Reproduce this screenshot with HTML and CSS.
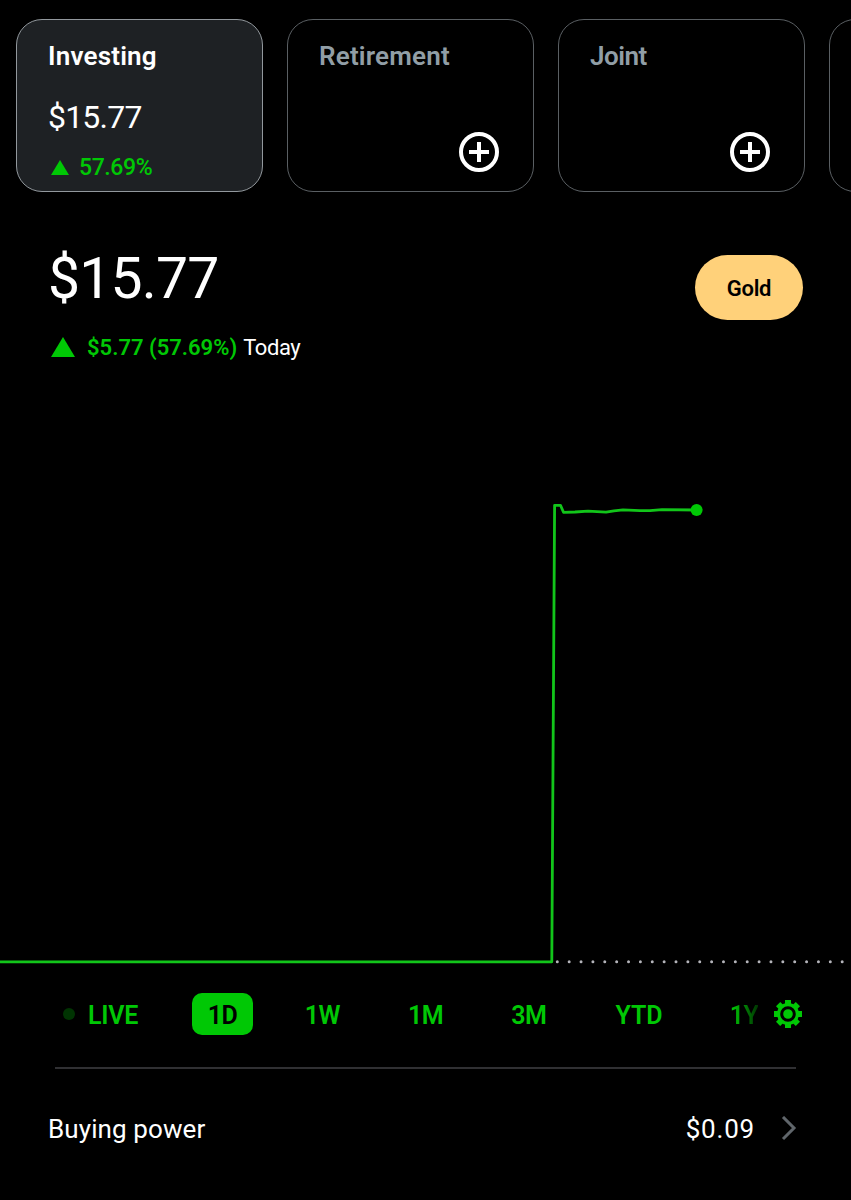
FILE: index.html
```html
<!DOCTYPE html>
<html lang="en">
<head>
    <meta charset="UTF-8">
    <meta name="viewport" content="width=device-width, initial-scale=1">
    <title>Investing</title>
    <link rel="stylesheet" href="styles.css">
</head>
<body>
    <div class="accounts">
        <div class="card active">
            <div class="card-title">Investing</div>
            <div class="card-value">$15.77</div>
            <div class="card-change">
                <svg width="18" height="15" viewBox="0 0 18 15"><path d="M9 0L18 15H0z" fill="#00c805"/></svg>
                <span>57.69%</span>
            </div>
        </div>
        <div class="card">
            <div class="card-title">Retirement</div>
            <svg class="add" width="40" height="40" viewBox="0 0 40 40" fill="none" stroke="#fff" stroke-width="4"><circle cx="20" cy="20" r="18"/><path d="M20 10v20M10 20h20"/></svg>
        </div>
        <div class="card">
            <div class="card-title joint">Joint</div>
            <svg class="add" width="40" height="40" viewBox="0 0 40 40" fill="none" stroke="#fff" stroke-width="4"><circle cx="20" cy="20" r="18"/><path d="M20 10v20M10 20h20"/></svg>
        </div>
        <div class="card"></div>
    </div>

    <div class="summary">
        <div>
            <div class="total">$15.77</div>
            <div class="change">
                <svg width="24" height="20" viewBox="0 0 24 20"><path d="M12 0L24 20H0z" fill="#00c805"/></svg>
                <span class="amount">$5.77 (57.69%)</span>
                <span class="today">Today</span>
            </div>
        </div>
        <button class="gold">Gold</button>
    </div>

    <svg class="chart" width="851" height="500" viewBox="0 480 851 500" fill="none">
        <path d="M557.3 961.8H851" stroke="#b4b4ba" stroke-width="3" stroke-linecap="round" stroke-dasharray="0 11.87"/>
        <path d="M0 961.8H551.8L554.6 505.3H560.5L563.5 512.3L575 512L588 511.2L606 512.2L614 510.8L623 509.9L640 510.6L650 510.6L662 509.7L696 510" stroke="#12c51a" stroke-width="2.8" stroke-linejoin="round"/>
        <circle cx="696.6" cy="510" r="6" fill="#00c805"/>
    </svg>

    <div class="ranges">
        <div class="range-list">
            <div class="range live"><span class="dot"></span>LIVE</div>
            <div class="range selected">1D</div>
            <div class="range">1W</div>
            <div class="range">1M</div>
            <div class="range">3M</div>
            <div class="range ytd">YTD</div>
            <div class="range fade">1Y</div>
        </div>
        <svg class="gear" width="28" height="28" viewBox="-14 -14 28 28">
            <g fill="#00c805">
                <rect x="-3" y="-14" width="6" height="28"/>
                <rect x="-14" y="-3" width="28" height="6"/>
                <rect x="-3" y="-14" width="6" height="28" transform="rotate(45)"/>
                <rect x="-3" y="-14" width="6" height="28" transform="rotate(-45)"/>
                <circle r="11"/>
            </g>
            <circle r="6.3" fill="none" stroke="#000" stroke-width="3"/>
        </svg>
    </div>

    <div class="row">
        <span class="label">Buying power</span>
        <span class="power">$0.09</span>
        <svg width="16" height="26" viewBox="0 0 16 26" fill="none" stroke="#60666b" stroke-width="3"><path d="M2 1L13 12L2 23"/></svg>
    </div>
</body>
</html>
```
FILE: styles.css
```css
* {
    box-sizing: border-box;
}
body {
    margin: 0;
    background-color: #000;
    color: #fff;
    font-family: Roboto, sans-serif;
    overflow: hidden;
}
svg {
    display: block;
    flex: none;
}

.accounts {
    display: flex;
    gap: 24px;
    padding: 19px 0 0 16px;
    overflow: hidden;
}
.card {
    flex: none;
    display: flex;
    flex-direction: column;
    width: 247px;
    height: 173px;
    padding: 21px 31px 0;
    border: 1px solid #5a5f63;
    border-radius: 26px;
}
.card.active {
    background-color: #1e2124;
    border-color: #92989d;
}
.card-title {
    font-size: 26px;
    line-height: 30px;
    font-weight: 600;
    letter-spacing: 0.2px;
    color: #919ea6;
    white-space: nowrap;
}
.active .card-title {
    color: #fff;
}
.card-title.joint {
    letter-spacing: -0.5px;
}
.card-value {
    margin-top: 27px;
    font-size: 32px;
    line-height: 38px;
    font-weight: 400;
    letter-spacing: -0.8px;
}
.card-change {
    display: flex;
    align-items: center;
    gap: 10px;
    margin: 19px 0 0 3px;
    font-size: 23px;
    line-height: 26px;
    font-weight: 500;
    letter-spacing: -0.4px;
    color: #00c805;
}
.card-change svg {
    margin-top: -2px;
}
.add {
    margin: 61px 3px 0 auto;
}

.summary {
    display: flex;
    justify-content: space-between;
    align-items: flex-start;
    height: 288px;
    padding: 54px 48px 0 48px;
}
.total {
    font-size: 57px;
    line-height: 66px;
    letter-spacing: -0.8px;
}
.change {
    display: flex;
    align-items: center;
    margin: 22px 0 0 3px;
    font-size: 22px;
    line-height: 28px;
}
.change svg {
    margin-top: -2px;
}
.amount {
    margin: 0 6px 0 12px;
    font-weight: 600;
    color: #00c805;
}
.today {
    font-weight: 400;
    letter-spacing: -0.4px;
}
.gold {
    width: 108px;
    height: 65px;
    margin-top: 9px;
    padding: 2px 0 0;
    border: none;
    border-radius: 33px;
    background-color: #ffd17a;
    font-family: Roboto, sans-serif;
    font-size: 22px;
    font-weight: 600;
    letter-spacing: -0.3px;
    color: #000;
}

.ranges {
    display: flex;
    align-items: center;
    width: 741px;
    height: 89px;
    margin-left: 55px;
    padding-bottom: 20px;
    border-bottom: 2px solid #303033;
}
.range-list {
    display: flex;
    align-items: center;
    gap: 36px;
    margin-left: 8px;
}
.range {
    padding: 3px 16px 0;
    font-size: 25px;
    line-height: 39px;
    font-weight: 600;
    letter-spacing: -0.5px;
    color: #00c805;
}
.live {
    display: flex;
    align-items: center;
    gap: 13px;
    margin-right: 2px;
    padding-left: 0;
    letter-spacing: -0.2px;
}
.dot {
    width: 12px;
    height: 12px;
    margin-top: -2px;
    border-radius: 50%;
    background-color: #003402;
}
.selected {
    padding: 3px 15.5px 0;
    border-radius: 10px;
    background-color: #00c805;
    color: #000;
}
.ytd {
    padding-left: 17px;
    letter-spacing: 0;
}
.fade {
    padding: 3px 0 0 15px;
    background: linear-gradient(90deg, #00c805 40%, #003402);
    background-clip: text;
    -webkit-background-clip: text;
    color: transparent;
}
.gear {
    margin-left: 16px;
}

.row {
    display: flex;
    align-items: center;
    height: 119px;
    padding: 0 54px 0 48px;
    font-size: 26px;
    font-weight: 400;
}
.label {
    letter-spacing: 0.1px;
}
.power {
    margin: 0 26px 0 auto;
    letter-spacing: 0.8px;
}
```
